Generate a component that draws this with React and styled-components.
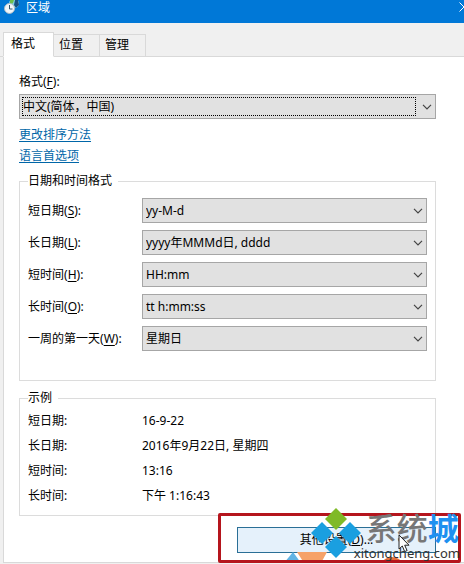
import React, { useState } from 'react';
import styled, { createGlobalStyle } from 'styled-components';

const GlobalStyle = createGlobalStyle`
    * { box-sizing:border-box; }
    body { margin:0; background:#f0f0f0; overflow:hidden; }
    body, button, select {
        font-family:'Noto Sans', 'Noto Sans CJK SC', sans-serif;
        font-size:12px; line-height:16px; color:#000;
    }
`

const TitleBar = styled.header`
    display:flex; align-items:flex-start; justify-content:space-between;
    height:23px; padding-left:4px;
    background:#0078d7; color:#fff;
    overflow:hidden;
    h1 { display:flex; gap:6px; margin:0; font-size:12px; font-weight:400; line-height:16px; }
    svg { flex:none; }
`

const CloseButton = styled.button`
    flex:none; display:flex;
    width:5px; height:16px; padding:2px 0 0;
    border:0; background:none; overflow:hidden;
`

const TabBar = styled.div`
    display:flex; align-items:flex-end;
    height:34px; padding:0 3px;
    box-shadow:inset 0 -1px #d9d9d9;
`

const Tab = styled.button`
    height:${p => p.$active ? '25px' : '23px'};
    width:${p => p.$active ? '51px' : '46px'};
    padding:0 0 2px;
    text-align:left;
    padding-left:${p => p.$active ? '7px' : '5px'};
    border:1px solid #d9d9d9;
    border-bottom-color:${p => p.$active ? '#fff' : '#d9d9d9'};
    border-left-width:${p => p.$joined ? '0' : '1px'};
    background:${p => p.$active ? '#fff' : '#f0f0f0'};
`

const Panel = styled.main`
    margin-left:3px;
    padding:17px 28px 9px 15px;
    border:solid #d9d9d9; border-width:0 0 1px 1px;
    background:#fff;
`

const FieldLabel = styled.label`
    white-space:nowrap;
    &.top { display:block; margin-bottom:4px; }
    u { text-underline-offset:2px; }
`

const Combo = styled.div`
    display:grid; align-items:center;
    min-width:0;
    > * { grid-area:1 / 1; }
    select {
        appearance:none;
        width:100%; height:25px; padding:0 24px 0 3px;
        border:1px solid #a6a6a6; border-radius:0;
        background:#e1e1e1;
        outline:none;
    }
    svg { justify-self:end; margin-right:4px; pointer-events:none; }
`

const FocusRing = styled.span`
    align-self:stretch;
    margin:3px 20px 3px 3px;
    border:1px dotted #000;
    pointer-events:none;
`

const Links = styled.nav`
    display:flex; flex-direction:column; align-items:flex-start; gap:5px;
    margin:8px 0 9px;
    a { color:#0066a8; text-underline-offset:2px; }
`

const Group = styled.fieldset`
    min-width:0; margin:0 0 9px;
    padding:${p => p.$sample ? '7px 8px 11px' : '9px 8px 29px'};
    border:1px solid #dcdcdc;
    legend { padding:0 6px 0 0; margin-left:0; }
`

const Row = styled.div`
    display:grid; grid-template-columns:114px 1fr; align-items:center;
    & + & { margin-top:7px; }
`

const SampleList = styled.dl`
    display:grid; grid-template-columns:114px 1fr; row-gap:9px;
    margin:0;
    dd { margin:0; }
`

const Actions = styled.div`
    position:relative;
    display:flex; justify-content:flex-end;
    padding-top:2px;
`

const MoreButton = styled.button`
    width:199px; height:26px; padding:0;
    border:1px solid #2a6f96;
    background:#e5f1fb;
`

const Highlight = styled.div`
    position:absolute; top:-12px; right:-25px; bottom:-10px;
    width:243px;
    border:3px solid #b5151d; border-radius:2px;
    pointer-events:none;
`

const Watermark = styled.div`
    position:absolute; top:-18px; right:-24px;
    display:flex;
    pointer-events:none;
    .name {
        margin-left:4px; padding-top:4px;
        color:#777; font-size:31px; line-height:35px; font-weight:500; white-space:nowrap;
        b { color:#1e90f0; font-weight:700; }
    }
    .site { display:block; margin:0 0 0 -8px; color:#333; font-size:13px; line-height:14px; }
`

const Pointer = styled.svg`
    position:absolute; top:9px; right:26px;
    pointer-events:none;
`

const Stamp = styled.svg`
    position:absolute; right:-20px; bottom:-10px;
    pointer-events:none;
`

const tabs = ['格式', '位置', '管理']

const formats = [
    {id:'sd', label:'短日期', hotkey:'S', value:'yy-M-d'},
    {id:'ld', label:'长日期', hotkey:'L', value:'yyyy年MMMd日, dddd'},
    {id:'st', label:'短时间', hotkey:'H', value:'HH:mm'},
    {id:'lt', label:'长时间', hotkey:'O', value:'tt h:mm:ss'},
    {id:'fd', label:'一周的第一天', hotkey:'W', value:'星期日'},
]

const samples = [
    {label:'短日期:', value:'16-9-22'},
    {label:'长日期:', value:'2016年9月22日, 星期四'},
    {label:'短时间:', value:'13:16'},
    {label:'长时间:', value:'下午 1:16:43'},
]

const RegionIcon = () => (
    <svg width="16" height="16" viewBox="0 0 16 16">
        <circle cx="10" cy="3.500" r="5" fill="#7fd0e6" />
        <path d="M6 0h4l-1 3-3 2z" fill="#6cc04a" />
        <path d="M11 0h3l1 5-3 3-2-3z" fill="#17507f" />
        <circle cx="5.500" cy="8.500" r="5" fill="#f2f6f9" stroke="#a9bac6" />
        <path d="M5.500 5V9H8.500" fill="none" stroke="#35546b" />
    </svg>
)

const Chevron = () => (
    <svg width="10" height="6" viewBox="0 0 10 6" fill="none" stroke="#444" strokeWidth="1.2">
        <path d="M1 .8 5 4.8 9 .8" />
    </svg>
)

const Select = ({id, value, focused}) => (
    <Combo>
        <select id={id} defaultValue={value}>
            <option>{value}</option>
        </select>
        {focused && <FocusRing />}
        <Chevron />
    </Combo>
)

const App = () => {

    const [active, setActive] = useState(0)

    return (
        <>
            <GlobalStyle />
            <TitleBar>
                <h1><RegionIcon />区域</h1>
                <CloseButton aria-label="关闭">
                    <svg width="10" height="10" viewBox="0 0 10 10" stroke="#fff"><path d="M.5 .5l9 9M9.5 .5l-9 9" /></svg>
                </CloseButton>
            </TitleBar>
            <TabBar role="tablist">
                {tabs.map((title, index) => (
                    <Tab key={title} role="tab" aria-selected={active === index} $active={active === index} $joined={index > 0} onClick={() => setActive(index)}>{title}</Tab>
                ))}
            </TabBar>
            <Panel>
                <FieldLabel className="top" htmlFor="locale">格式(<u>F</u>):</FieldLabel>
                <Select id="locale" value="中文(简体，中国)" focused />
                <Links>
                    <a href="#sort">更改排序方法</a>
                    <a href="#language">语言首选项</a>
                </Links>
                <Group>
                    <legend>日期和时间格式</legend>
                    {formats.map(data => (
                        <Row key={data.id}>
                            <FieldLabel htmlFor={data.id}>{data.label}(<u>{data.hotkey}</u>):</FieldLabel>
                            <Select id={data.id} value={data.value} />
                        </Row>
                    ))}
                </Group>
                <Group $sample>
                    <legend>示例</legend>
                    <SampleList>
                        {samples.map(data => (
                            <React.Fragment key={data.label}>
                                <dt>{data.label}</dt>
                                <dd>{data.value}</dd>
                            </React.Fragment>
                        ))}
                    </SampleList>
                </Group>
                <Actions>
                    <MoreButton>其他设置(<u>D</u>)...</MoreButton>
                    <Stamp width="172" height="11" viewBox="0 0 172 11">
                        <path d="M0 11 9 0l8 11z" fill="#62b4e4" />
                        <path d="M13 0h30l-6 11H20z" fill="#f6a268" />
                        <path d="M96 11q12-12 24 0z" fill="#e8703a" />
                    </Stamp>
                    <Highlight />
                    <Watermark>
                        <svg width="52" height="54" viewBox="0 0 52 54">
                            <path d="M26 1 37 12 26 23 15 12z" fill="#7fba27" />
                            <path d="M12 15 23 26 12 37 1 26z" fill="#1a9fe0" />
                            <path d="M40 15 51 26 40 37 29 26z" fill="#1a9fe0" />
                            <path d="M26 29 37 40 26 51 15 40z" fill="#1a9fe0" />
                        </svg>
                        <div>
                            <div className="name">系统<b>城</b></div>
                            <span className="site">xitongcheng.com</span>
                        </div>
                    </Watermark>
                    <Pointer width="12" height="19" viewBox="0 0 12 19">
                        <path d="M1 1v14l3.3-3 2.4 5.6 2.4-1L6.700 11.200H11z" fill="#fff" stroke="#222" />
                    </Pointer>
                </Actions>
            </Panel>
        </>
    );

};

export default App;
